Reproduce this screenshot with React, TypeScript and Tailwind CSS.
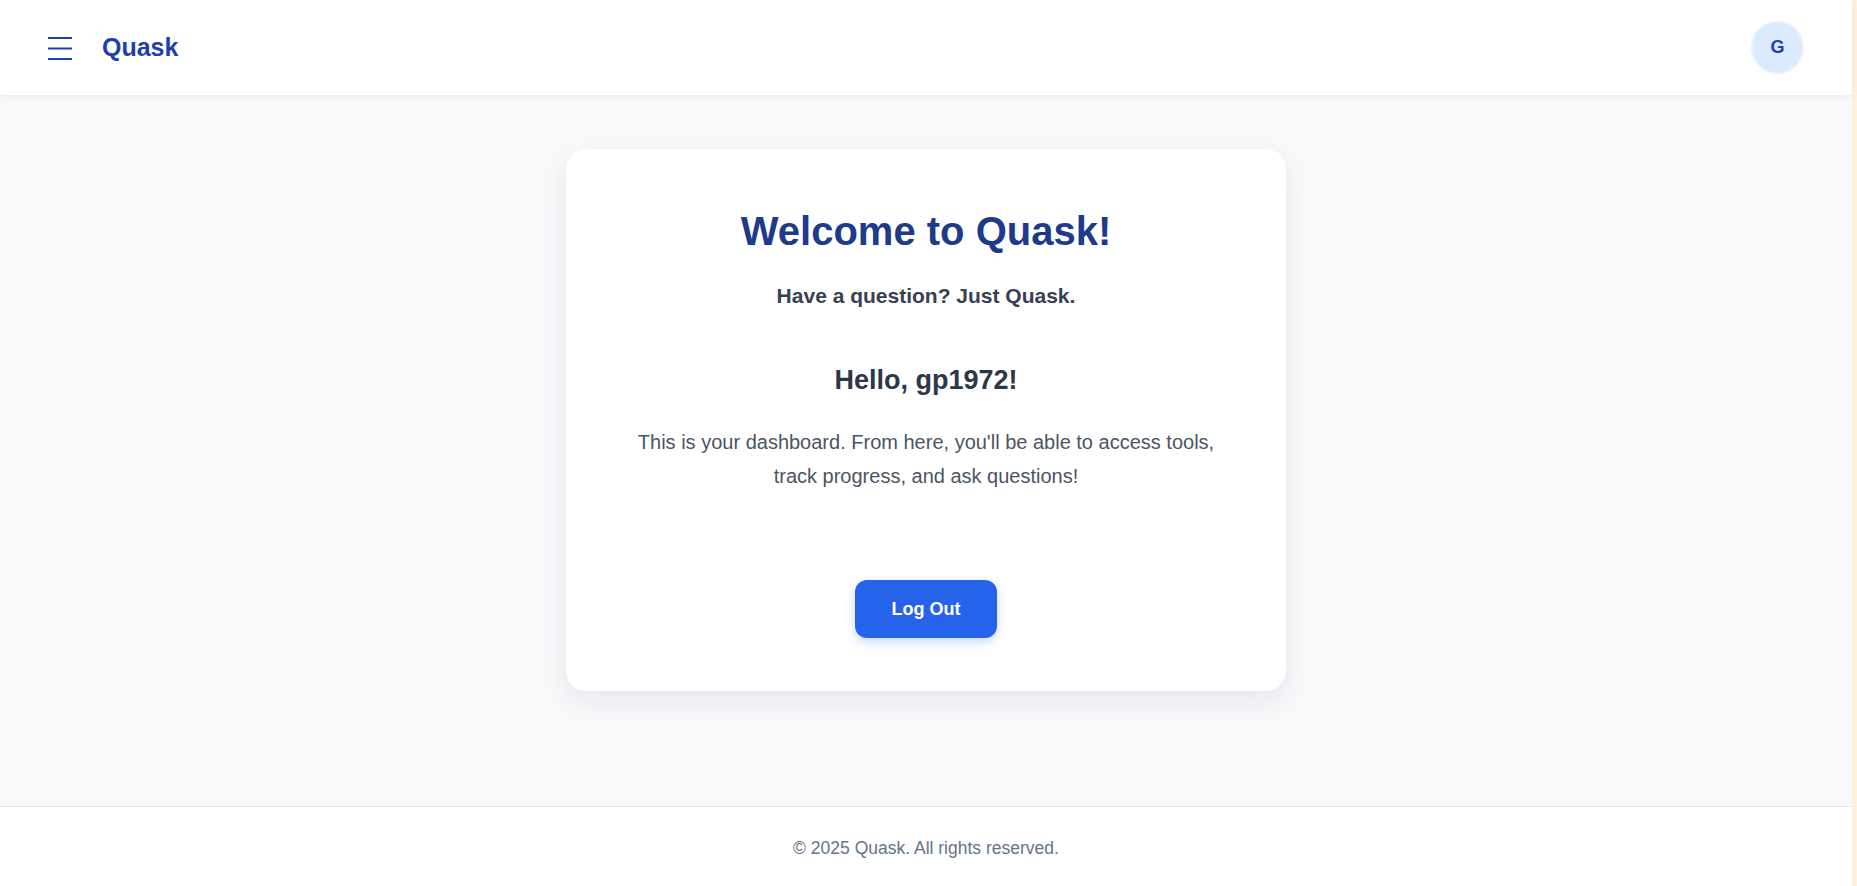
import React from 'react';

const font = { fontFamily: '"Segoe UI", "Liberation Sans", Arial, sans-serif' };

const MenuIcon: React.FC = () => (
  <svg width="24" height="24" viewBox="0 0 24 24" className="text-[#1e40af]">
    <rect x="0" y="1" width="24" height="2" fill="currentColor" />
    <rect x="0" y="11.5" width="24" height="2" fill="currentColor" />
    <rect x="0" y="22" width="24" height="2" fill="currentColor" />
  </svg>
);

const App: React.FC = () => {
  return (
    <div className="flex h-[886px] w-full" style={font}>
      <div className="flex-1 flex flex-col bg-[#f8f9fb] min-w-0">
        {/* Header */}
        <header className="h-[95px] bg-white flex items-center justify-between pl-12 pr-[48px] shadow-[0_2px_6px_rgba(0,0,0,0.06)] relative z-10">
          <div className="flex items-center gap-[30px]">
            <MenuIcon />
            <span className="text-[25px] font-bold text-[#1e40af]">Quask</span>
          </div>
          <div className="w-[53px] h-[53px] rounded-full bg-[#dbeafe] border-2 border-[#e8f0fe] flex items-center justify-center text-[18px] font-semibold text-[#1e40af]">
            G
          </div>
        </header>

        {/* Main */}
        <main className="flex-1 flex justify-center pt-[54px]">
          <div className="w-[720px] h-[542px] bg-white rounded-[20px] shadow-[0_10px_30px_rgba(15,23,42,0.08)] flex flex-col items-center text-center pt-[58px]">
            <h1 className="text-[40px] leading-[48px] font-bold text-[#1e3a8a]">Welcome to Quask!</h1>
            <p className="mt-[27px] text-[21px] leading-[28px] font-semibold text-[#374151]">Have a question? Just Quask.</p>
            <h2 className="mt-[53px] text-[27px] leading-[34px] font-bold text-[#2d3748]">Hello, gp1972!</h2>
            <p className="mt-[28px] text-[20px] leading-[34px] text-[#4b5563] max-w-[610px]">
              This is your dashboard. From here, you'll be able to access tools, track progress, and ask questions!
            </p>
            <button className="mt-[87px] w-[142px] h-[58px] rounded-xl bg-[#2563eb] text-white text-[18px] font-semibold shadow-[0_4px_10px_rgba(37,99,235,0.25)]">
              Log Out
            </button>
          </div>
        </main>

        {/* Footer */}
        <footer className="h-[80px] bg-white border-t border-[#e2e8f0] flex items-center justify-center pt-[4px]">
          <span className="text-[17.5px] text-[#64748b]">© 2025 Quask. All rights reserved.</span>
        </footer>
      </div>
      <div className="w-[5px] bg-[#fdf1dc]" />
    </div>
  );
};

export default App;
